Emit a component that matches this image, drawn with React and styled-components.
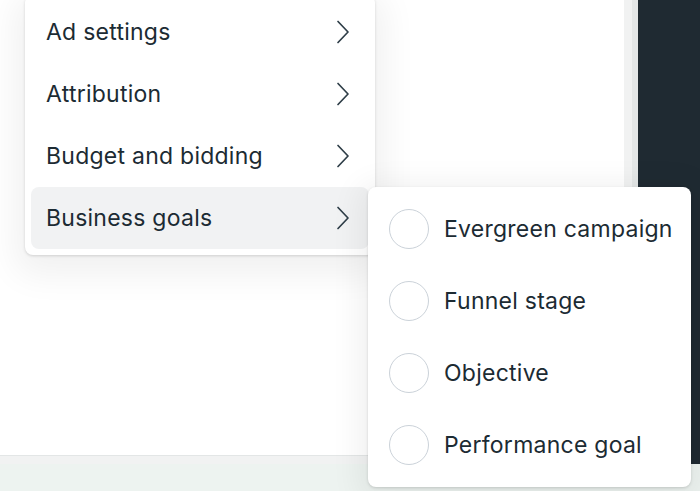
import React from "react";
import styled, { createGlobalStyle } from "styled-components";

const GlobalStyle = createGlobalStyle`
  html, body {
    margin: 0;
    padding: 0;
    background: #ffffff;
    overflow: hidden;
  }
  body {
    font-family: Inter, "Noto Sans", "Liberation Sans", sans-serif;
    color: #1c2b33;
  }
`;

const menuItems = ["Ad settings", "Attribution", "Budget and bidding", "Business goals"];
const goalOptions = ["Evergreen campaign", "Funnel stage", "Objective", "Performance goal"];

function Chevron() {
  return (
    <svg width="14" height="24" viewBox="0 0 14 24" fill="none">
      <path
        d="M2 1.5 L12 12 L2 22.5"
        stroke="#2f3e48"
        strokeWidth="1.7"
        strokeLinecap="round"
        strokeLinejoin="round"
      />
    </svg>
  );
}

export default function App() {
  return (
    <>
      <GlobalStyle />
      <Page>
        <Workspace>
          <Canvas>
            <Footer />
          </Canvas>
          <Divider />
          <SidePanel />
        </Workspace>
        <BottomBar />

        <Menu>
          {menuItems.map((label) => (
            <MenuItem key={label} $active={label === "Business goals"}>
              <span>{label}</span>
              <Chevron />
            </MenuItem>
          ))}
        </Menu>

        <SubMenu>
          {goalOptions.map((label) => (
            <Option key={label}>
              <Radio />
              <span>{label}</span>
            </Option>
          ))}
        </SubMenu>
      </Page>
    </>
  );
}

const Page = styled.div`
  position: relative;
  width: 700px;
  height: 491px;
  display: flex;
  flex-direction: column;
  overflow: hidden;
`;

const Workspace = styled.div`
  display: flex;
  height: 464px;
`;

const Canvas = styled.div`
  flex: 1;
  display: flex;
  flex-direction: column;
  justify-content: flex-end;
  background: #ffffff;
`;

const Footer = styled.div`
  height: 8px;
  background: #f1f2f2;
  border-top: 1px solid #e3e6e6;
`;

const Divider = styled.div`
  width: 8px;
  background: #f1f2f2;
  border-right: 6px solid #e4e7e7;
`;

const SidePanel = styled.div`
  width: 62px;
  background: #1f2a32;
`;

const BottomBar = styled.div`
  flex: 1;
  background: #edf3f0;
`;

const Menu = styled.div`
  position: absolute;
  left: 25px;
  top: -5px;
  width: 338px;
  padding: 6px;
  background: #ffffff;
  border-radius: 8px;
  box-shadow: 0 1px 3px rgba(0, 0, 0, 0.15), 0 10px 34px 10px rgba(0, 0, 0, 0.06);
`;

const MenuItem = styled.div`
  height: 62px;
  display: flex;
  align-items: center;
  justify-content: space-between;
  padding: 0 19px 0 15px;
  border-radius: 8px;
  background: ${(p) => (p.$active ? "#f1f2f3" : "transparent")};
  font-size: 23px;
  letter-spacing: 0.25px;
`;

const SubMenu = styled.div`
  position: absolute;
  left: 368px;
  top: 187px;
  width: 323px;
  padding: 6px 0;
  background: #ffffff;
  border-radius: 8px;
  box-shadow: 0 1px 3px rgba(0, 0, 0, 0.15), 0 6px 30px 10px rgba(0, 0, 0, 0.06);
`;

const Option = styled.div`
  height: 72px;
  display: flex;
  align-items: center;
  gap: 15px;
  padding-left: 21px;
  font-size: 23px;
  letter-spacing: 0.25px;
`;

const Radio = styled.div`
  width: 38px;
  height: 38px;
  border: 1.5px solid #cbd2d9;
  border-radius: 50%;
  flex-shrink: 0;
`;
